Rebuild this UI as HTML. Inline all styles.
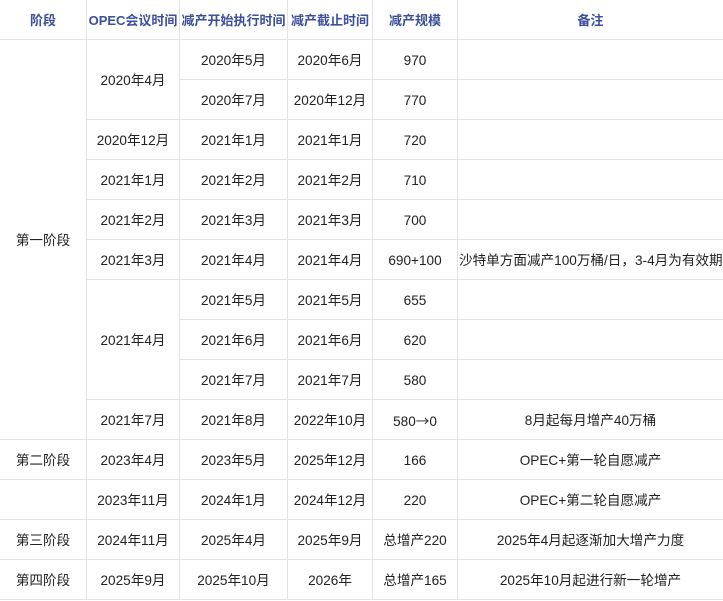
<!DOCTYPE html><html><head><meta charset="utf-8"><style>
body{margin:0;background:#fff;}
table{border-collapse:collapse;table-layout:fixed;width:724px;font-family:"Liberation Sans","Noto Sans CJK SC",sans-serif;font-size:13.6px;color:#222;position:absolute;left:-1px;top:-1px;}
td,th{border:1px solid #e3e3e3;height:37px;padding:2px 0 0 0;text-align:center;white-space:nowrap;overflow:visible;line-height:16px;}
th{color:#3c4f9c;font-weight:bold;font-size:13px;}
.ar{font-family:"Noto Sans CJK SC",sans-serif;}
</style></head><body>
<table>
<colgroup><col style="width:87px"><col style="width:93px"><col style="width:108px"><col style="width:85px"><col style="width:85px"><col style="width:266px"></colgroup>
<tr><th>阶段</th><th>OPEC会议时间</th><th>减产开始执行时间</th><th>减产截止时间</th><th>减产规模</th><th>备注</th></tr>
<tr><td rowspan="10">第一阶段</td><td rowspan="2">2020年4月</td><td>2020年5月</td><td>2020年6月</td><td>970</td><td></td></tr>
<tr><td>2020年7月</td><td>2020年12月</td><td>770</td><td></td></tr>
<tr><td>2020年12月</td><td>2021年1月</td><td>2021年1月</td><td>720</td><td></td></tr>
<tr><td>2021年1月</td><td>2021年2月</td><td>2021年2月</td><td>710</td><td></td></tr>
<tr><td>2021年2月</td><td>2021年3月</td><td>2021年3月</td><td>700</td><td></td></tr>
<tr><td>2021年3月</td><td>2021年4月</td><td>2021年4月</td><td>690+100</td><td style="text-align:left;padding-left:1px">沙特单方面减产100万桶/日，3-4月为有效期</td></tr>
<tr><td rowspan="3">2021年4月</td><td>2021年5月</td><td>2021年5月</td><td>655</td><td></td></tr>
<tr><td>2021年6月</td><td>2021年6月</td><td>620</td><td></td></tr>
<tr><td>2021年7月</td><td>2021年7月</td><td>580</td><td></td></tr>
<tr><td>2021年7月</td><td>2021年8月</td><td>2022年10月</td><td>580<span class="ar">→</span>0</td><td>8月起每月增产40万桶</td></tr>
<tr><td>第二阶段</td><td>2023年4月</td><td>2023年5月</td><td>2025年12月</td><td>166</td><td>OPEC+第一轮自愿减产</td></tr>
<tr><td></td><td>2023年11月</td><td>2024年1月</td><td>2024年12月</td><td>220</td><td>OPEC+第二轮自愿减产</td></tr>
<tr><td>第三阶段</td><td>2024年11月</td><td>2025年4月</td><td>2025年9月</td><td>总增产220</td><td>2025年4月起逐渐加大增产力度</td></tr>
<tr><td>第四阶段</td><td>2025年9月</td><td>2025年10月</td><td>2026年</td><td>总增产165</td><td>2025年10月起进行新一轮增产</td></tr>
</table>
</body></html>
